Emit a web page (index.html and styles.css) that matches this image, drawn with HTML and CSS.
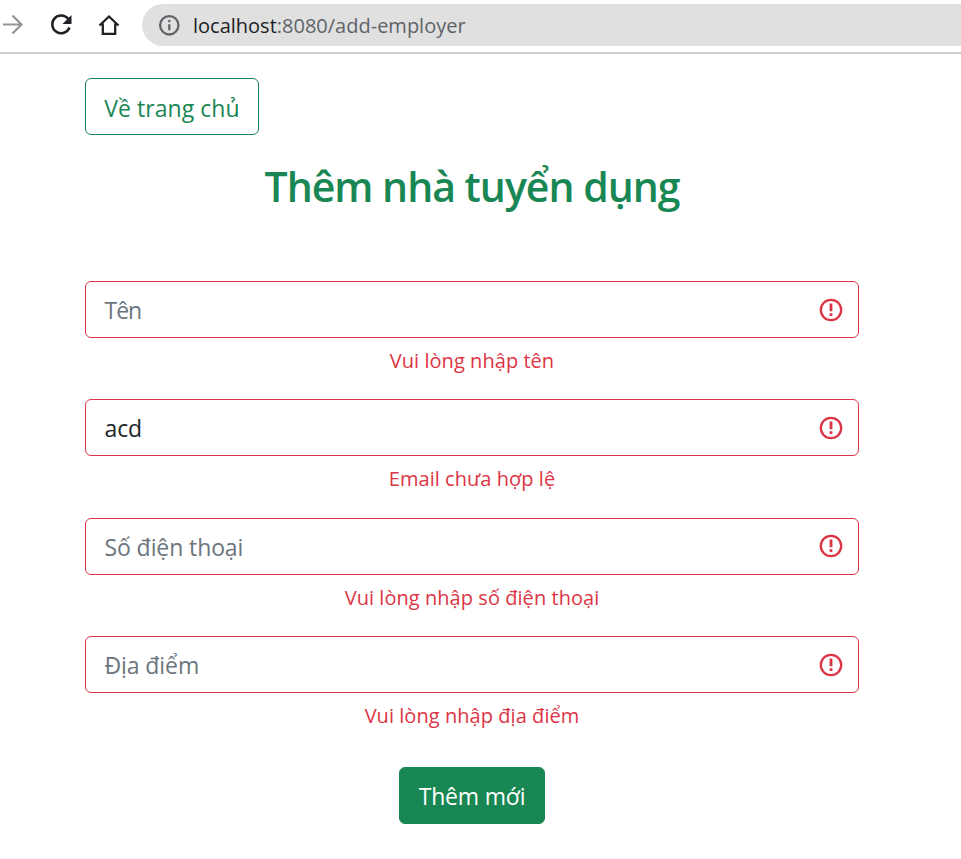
FILE: index.html
```
<!DOCTYPE html>
<html lang="vi">
<head>
<meta charset="utf-8">
<title>Thêm nhà tuyển dụng</title>
<link rel="stylesheet" href="styles.css">
</head>
<body>
<header class="toolbar">
  <svg class="forward" width="24" height="24" viewBox="0 0 24 24"><path d="M3 11.500H22M12.500 2.500l9 9-9 9"/></svg>
  <svg class="reload" width="24" height="24" viewBox="0 0 24 24"><path class="arc" d="M19.300 6A8.900 8.900 0 1 0 20.500 14.500"/><path class="tip" d="M22.500 2v9h-9z"/></svg>
  <svg class="home" width="24" height="24" viewBox="0 0 24 24"><path d="M2.500 12.500L12 3.500l9.500 9M5.800 10.500V20.800h12.400V10.500"/></svg>
  <div class="address">
    <svg class="info" width="22" height="22" viewBox="0 0 22 22"><circle cx="11.300" cy="11.300" r="9.200"/><path d="M11.300 10.200v6M11.300 6v2.300"/></svg>
    <span class="url"><span class="host">localhost</span>:8080/add-employer</span>
  </div>
</header>
<main class="container">
  <a class="btn back"><span>Về trang chủ</span></a>
  <h1><span>Thêm nhà tuyển dụng</span></h1>
  <form>
    <div class="field"><div class="input"><span class="placeholder name">Tên</span><svg viewBox="0 0 24 24"><circle cx="12" cy="12" r="10.200"/><path d="M12 5.500v7.800M12 15.300v2.700"/></svg></div><p class="error"><span>Vui lòng nhập tên</span></p></div>
    <div class="field"><div class="input"><span>acd</span><svg viewBox="0 0 24 24"><circle cx="12" cy="12" r="10.200"/><path d="M12 5.500v7.800M12 15.300v2.700"/></svg></div><p class="error"><span>Email chưa hợp lệ</span></p></div>
    <div class="field"><div class="input"><span class="placeholder">Số điện thoại</span><svg viewBox="0 0 24 24"><circle cx="12" cy="12" r="10.200"/><path d="M12 5.500v7.800M12 15.300v2.700"/></svg></div><p class="error"><span>Vui lòng nhập số điện thoại</span></p></div>
    <div class="field"><div class="input"><span class="placeholder">Địa điểm</span><svg viewBox="0 0 24 24"><circle cx="12" cy="12" r="10.200"/><path d="M12 5.500v7.800M12 15.300v2.700"/></svg></div><p class="error"><span>Vui lòng nhập địa điểm</span></p></div>
    <button class="btn submit" type="button"><span>Thêm mới</span></button>
  </form>
</main>
</body>
</html>
```
FILE: styles.css
```
* { box-sizing: border-box; }
body { margin: 0; height: 859px; overflow: hidden; background: #fff; color: #212529; font-family: "Open Sans", "Noto Sans", sans-serif; font-size: 23px; }
svg { flex: none; fill: none; stroke: currentColor; }
.toolbar { height: 54px; border-bottom: 2px solid #cfcfcf; display: flex; align-items: flex-start; padding-top: 4px; }
.forward { margin: 9px 25px 0 0; color: #959595; stroke-width: 2.2; }
.reload { margin: 9px 24px 0 0; stroke-width: 2.5; color: #202124; }
.reload .tip { fill: currentColor; stroke: none; }
.home { margin: 9px 21px 0 0; stroke-width: 2.3; color: #202124; }
.address { flex: 1; height: 42px; border-radius: 21px 0 0 21px; background: #e0e0e0; display: flex; align-items: center; padding-left: 16px; gap: 13px; color: #5f6368; }
.info { stroke-width: 2.3; }
.url { font-size: 20px; white-space: nowrap; }
.host { color: #202124; }
.container { width: 774px; margin: 24px 0 0 85px; }
.btn { display: flex; align-items: center; justify-content: center; height: 57px; border: 1px solid #198754; border-radius: 6px; font: inherit; white-space: nowrap; }
.back { width: 174px; color: #198754; padding-top: 3px; letter-spacing: 0.05px; }
h1 { margin: 17px 0 0; height: 68px; line-height: 68px; font-size: 41px; font-weight: 600; letter-spacing: -1px; color: #198754; text-align: center; white-space: nowrap; }
form { margin-top: 61px; }
.field { height: 118.400px; }
.input { height: 57px; border: 1px solid #dc3545; border-radius: 6px; display: flex; align-items: center; justify-content: space-between; padding: 0 15px 0 18.500px; }
.input svg { width: 24px; height: 24px; color: #dc3545; stroke-width: 2.300; }
.input svg path { stroke-width: 2.800; }
.input span { padding-top: 1px; letter-spacing: -0.100px; }
.placeholder { color: #6c757d; }
.input .name { letter-spacing: -1px; }
.error { margin: 7px 0 0; color: #dc3545; font-size: 20px; line-height: 32px; letter-spacing: 0.050px; text-align: center; }
.submit { width: 146px; margin: 12.400px auto 0; background: #198754; color: #fff; padding: 1px 0 0; letter-spacing: -0.200px; }
```
